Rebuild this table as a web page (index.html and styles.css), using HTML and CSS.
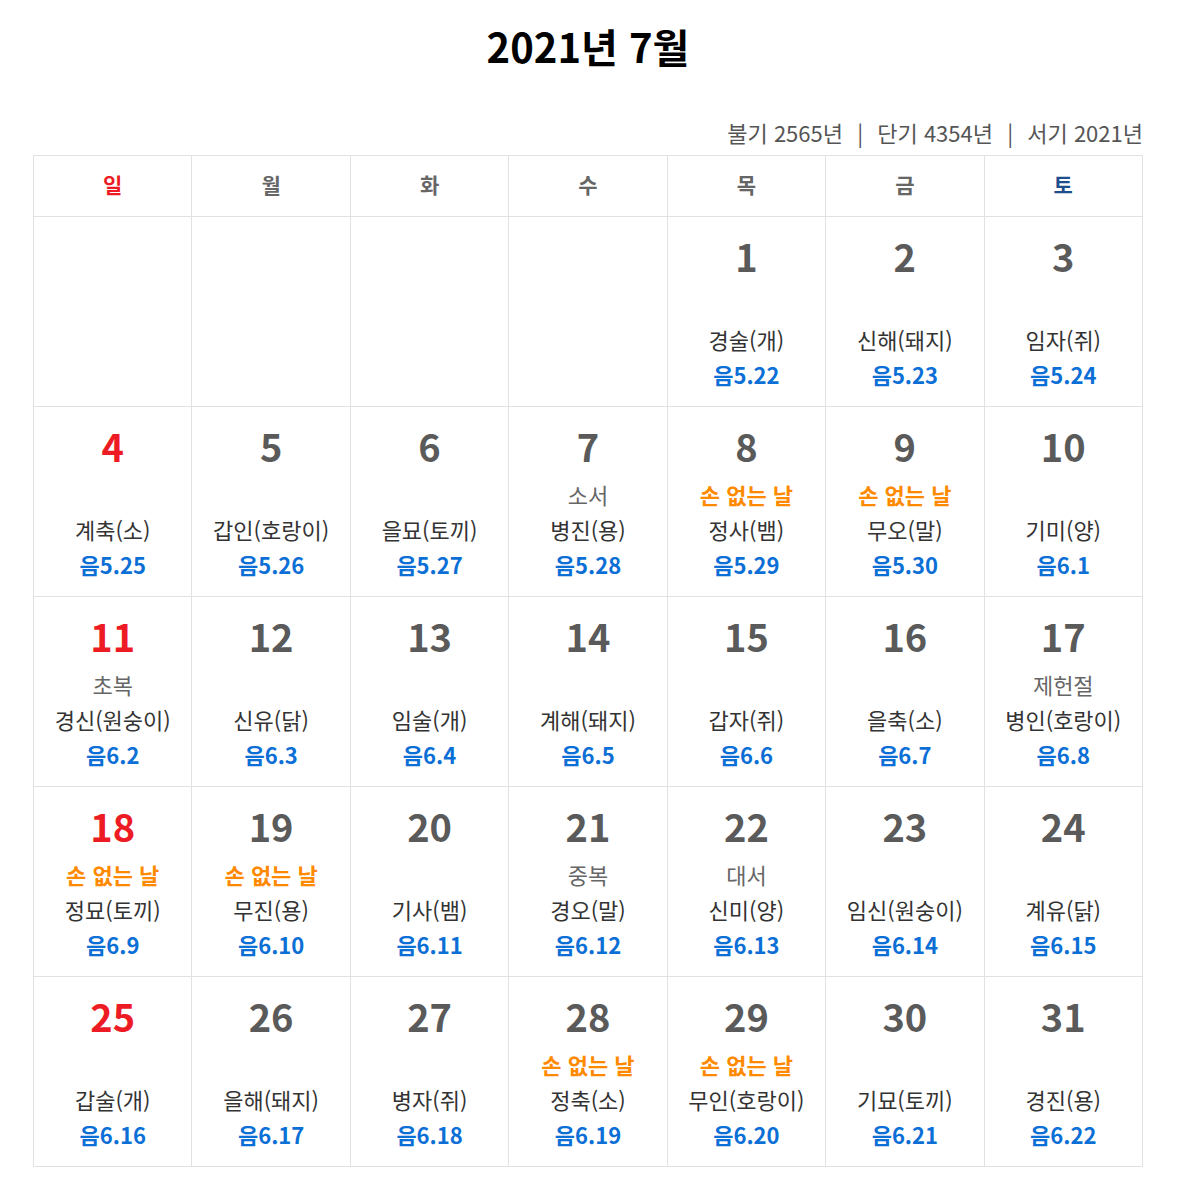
FILE: index.html
```html
<!DOCTYPE html>
<html lang="ko">
<head>
<meta charset="utf-8">
<title>2021년 7월</title>
<link rel="stylesheet" href="styles.css">
</head>
<body>
<div class="page">
  <h1 class="title">2021년 7월</h1>
  <div class="era">불기 2565년 <span class="sep">|</span> 단기 4354년 <span class="sep">|</span> 서기 2021년</div>
  <table class="cal">
    <thead>
      <tr>
        <th class="sun">일</th><th>월</th><th>화</th><th>수</th><th>목</th><th>금</th><th class="sat">토</th>
      </tr>
    </thead>
    <tbody>
      <tr>
        <td></td><td></td><td></td><td></td>
        <td><div class="d">1</div><div class="ev"></div><div class="gz">경술(개)</div><div class="lu">음5.22</div></td>
        <td><div class="d">2</div><div class="ev"></div><div class="gz">신해(돼지)</div><div class="lu">음5.23</div></td>
        <td><div class="d">3</div><div class="ev"></div><div class="gz">임자(쥐)</div><div class="lu">음5.24</div></td>
      </tr>
      <tr>
        <td><div class="d red">4</div><div class="ev"></div><div class="gz">계축(소)</div><div class="lu">음5.25</div></td>
        <td><div class="d">5</div><div class="ev"></div><div class="gz">갑인(호랑이)</div><div class="lu">음5.26</div></td>
        <td><div class="d">6</div><div class="ev"></div><div class="gz">을묘(토끼)</div><div class="lu">음5.27</div></td>
        <td><div class="d">7</div><div class="ev">소서</div><div class="gz">병진(용)</div><div class="lu">음5.28</div></td>
        <td><div class="d">8</div><div class="ev son">손 없는 날</div><div class="gz">정사(뱀)</div><div class="lu">음5.29</div></td>
        <td><div class="d">9</div><div class="ev son">손 없는 날</div><div class="gz">무오(말)</div><div class="lu">음5.30</div></td>
        <td><div class="d">10</div><div class="ev"></div><div class="gz">기미(양)</div><div class="lu">음6.1</div></td>
      </tr>
      <tr>
        <td><div class="d red">11</div><div class="ev">초복</div><div class="gz">경신(원숭이)</div><div class="lu">음6.2</div></td>
        <td><div class="d">12</div><div class="ev"></div><div class="gz">신유(닭)</div><div class="lu">음6.3</div></td>
        <td><div class="d">13</div><div class="ev"></div><div class="gz">임술(개)</div><div class="lu">음6.4</div></td>
        <td><div class="d">14</div><div class="ev"></div><div class="gz">계해(돼지)</div><div class="lu">음6.5</div></td>
        <td><div class="d">15</div><div class="ev"></div><div class="gz">갑자(쥐)</div><div class="lu">음6.6</div></td>
        <td><div class="d">16</div><div class="ev"></div><div class="gz">을축(소)</div><div class="lu">음6.7</div></td>
        <td><div class="d">17</div><div class="ev">제헌절</div><div class="gz">병인(호랑이)</div><div class="lu">음6.8</div></td>
      </tr>
      <tr>
        <td><div class="d red">18</div><div class="ev son">손 없는 날</div><div class="gz">정묘(토끼)</div><div class="lu">음6.9</div></td>
        <td><div class="d">19</div><div class="ev son">손 없는 날</div><div class="gz">무진(용)</div><div class="lu">음6.10</div></td>
        <td><div class="d">20</div><div class="ev"></div><div class="gz">기사(뱀)</div><div class="lu">음6.11</div></td>
        <td><div class="d">21</div><div class="ev">중복</div><div class="gz">경오(말)</div><div class="lu">음6.12</div></td>
        <td><div class="d">22</div><div class="ev">대서</div><div class="gz">신미(양)</div><div class="lu">음6.13</div></td>
        <td><div class="d">23</div><div class="ev"></div><div class="gz">임신(원숭이)</div><div class="lu">음6.14</div></td>
        <td><div class="d">24</div><div class="ev"></div><div class="gz">계유(닭)</div><div class="lu">음6.15</div></td>
      </tr>
      <tr>
        <td><div class="d red">25</div><div class="ev"></div><div class="gz">갑술(개)</div><div class="lu">음6.16</div></td>
        <td><div class="d">26</div><div class="ev"></div><div class="gz">을해(돼지)</div><div class="lu">음6.17</div></td>
        <td><div class="d">27</div><div class="ev"></div><div class="gz">병자(쥐)</div><div class="lu">음6.18</div></td>
        <td><div class="d">28</div><div class="ev son">손 없는 날</div><div class="gz">정축(소)</div><div class="lu">음6.19</div></td>
        <td><div class="d">29</div><div class="ev son">손 없는 날</div><div class="gz">무인(호랑이)</div><div class="lu">음6.20</div></td>
        <td><div class="d">30</div><div class="ev"></div><div class="gz">기묘(토끼)</div><div class="lu">음6.21</div></td>
        <td><div class="d">31</div><div class="ev"></div><div class="gz">경진(용)</div><div class="lu">음6.22</div></td>
      </tr>
    </tbody>
  </table>
</div>
</body>
</html>
```

FILE: styles.css
```css
html, body {
  margin: 0;
  padding: 0;
  background: #fff;
}
body {
  font-family: "Noto Sans CJK KR", "Noto Sans", sans-serif;
  color: #333;
}
.page {
  width: 1110px;
  margin: 0 0 0 33px;
  padding-top: 18px;
}
.title {
  margin: 0;
  text-align: center;
  font-size: 40px;
  font-weight: 700;
  line-height: 56px;
  color: #000;
}
.era {
  margin-top: 43px;
  text-align: right;
  font-size: 22px;
  line-height: 30px;
  color: #555;
  padding-bottom: 8px;
}
.sep {
  margin: 0 8px;
}
.cal {
  width: 1110px;
  border-collapse: collapse;
  table-layout: fixed;
}
.cal th, .cal td {
  border: 1px solid #e2e2e2;
  text-align: center;
}
.cal th {
  height: 61px;
  padding: 0 0 5px;
  box-sizing: border-box;
  font-size: 21px;
  font-weight: 700;
  color: #666;
}
.cal th.sun { color: #ed1c24; }
.cal th.sat { color: #1f4e8c; }
.cal td {
  height: 189px;
  padding: 0;
  vertical-align: top;
}
.d {
  padding-top: 11px;
  margin-bottom: 3px;
  font-size: 38px;
  font-weight: 700;
  line-height: 56px;
  color: #5a5a5a;
}
.d.red { color: #ed1c24; }
.ev {
  height: 35px;
  line-height: 35px;
  font-size: 22px;
  color: #666;
}
.ev.son {
  color: #ff8a00;
  font-weight: 700;
}
.gz {
  line-height: 35px;
  font-size: 22px;
  color: #333;
}
.lu {
  line-height: 35px;
  font-size: 22px;
  font-weight: 700;
  color: #0b6fd6;
}
```
